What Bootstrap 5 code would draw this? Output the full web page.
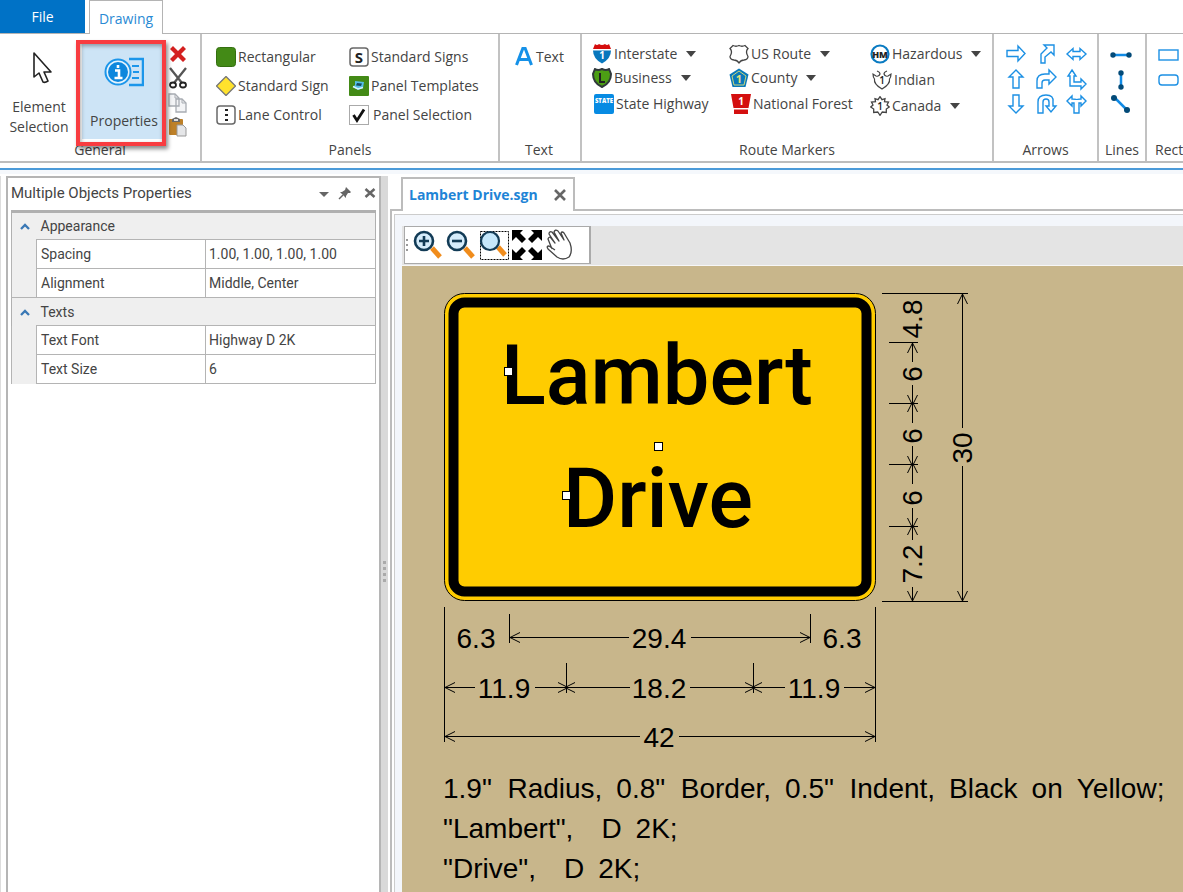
<!DOCTYPE html>
<html lang="en">
<head>
<meta charset="utf-8">
<meta name="viewport" content="width=device-width, initial-scale=1">
<title>Lambert Drive.sgn</title>
<link href="https://cdn.jsdelivr.net/npm/bootstrap@5.3.0/dist/css/bootstrap.min.css" rel="stylesheet">
<style>
body{font-family:"Open Sans","Noto Sans",sans-serif;font-size:14px;line-height:20px;color:#444;background:#fff;overflow:hidden}
button{color:inherit;background:none;border:0;padding:0;text-align:left;white-space:nowrap}
svg{display:block;flex:none}
.tab-strip{height:33px}
.file-tab{width:85px;height:33px;background:#0072c6;color:#fff;text-align:center;margin-right:4px}
.draw-tab{width:74px;height:34px;color:#2a8ad4;border:1px solid #b4b4b4;border-bottom:0;background:#fff;text-align:center;position:relative;z-index:2;text-decoration:none;line-height:35px}
.ribbon{height:130px;border-top:1px solid #b4b4b4;border-bottom:2px solid #bdbdbd}
.grp{border-right:2px solid #c2c2c2;flex:none;padding-top:8px}
.grp-title{height:22px;line-height:22px;text-align:center;margin-top:auto;flex:none}
.g-general{width:202px}.g-panels{width:298px}.g-text{width:82px}.g-route{width:412px}.g-arrows{width:105px}.g-lines{width:48px}.g-rect{width:90px}
.g-panels .tools,.g-text{padding-left:14px}
.g-route .tools{padding-left:10px}
.panel-col{width:133px}
.route-col{width:137px}
.route-col-wide{width:141px}
.tool29{height:29px;display:flex;align-items:center;gap:2px}
.drop{height:24px;display:flex;align-items:center;gap:2px}
.drop::after{content:"";border:5px solid transparent;border-top:6px solid #444;border-bottom:0;margin-left:7px}
.plain{height:28px;display:flex;align-items:center;gap:2px;padding-left:2px}
.big{height:97px;text-align:center;display:flex;flex-direction:column;align-items:center}
.big-el{width:78px;padding-top:9px}
.big-el svg{margin-bottom:12px}
.big-prop{width:84px;background:#cde4f6;padding-top:15px}
.mini{height:25px;display:flex;align-items:center}
.mini-col{height:97px;padding-left:2px}
.red-mark{left:76px;top:40px;width:90px;height:106px;border:4px solid #f83c40;box-shadow:2px 3px 4px rgba(0,0,0,.45),inset 1px 2px 4px rgba(0,0,0,.35);pointer-events:none;z-index:3}
.tick{appearance:none;width:20px;height:20px;margin:0 2px 0 0;border:1px solid #aaa;background:#fff}
.tick:checked{background:#fff url("data:image/svg+xml,%3Csvg xmlns='http://www.w3.org/2000/svg' viewBox='0 0 18 18'%3E%3Cpath d='M3.500 9l3.500 5.500L14 3.500' fill='none' stroke='%23111' stroke-width='2.800'/%3E%3C/svg%3E")}
.blue-rule{height:8px;margin-top:5px;border-top:2px solid #4c9bd9;background:#f5f8fc;border-bottom:2px solid #fff}
.work{border-left:1px solid #ddd;min-height:0}
.side{width:375px;margin-left:5px;border:2px solid #b5b5b5;border-bottom:0;padding:0 3px;font-family:Roboto,sans-serif}
.side-head{height:32px;padding-bottom:3px;font-size:15px}
.props{width:100%;border-top:3px solid #b0b0b0;border-right:1px solid #b0b0b0;border-left:1px solid #b0b0b0;table-layout:fixed;font-size:14px}
.c-gut{width:25px}.c-name{width:169px}
.props td,.props th{padding:0 3px;height:29px;font-weight:400;border:1px solid #b4b4b4;line-height:20px}
.props .cat th,.props .cat td{height:28px;background:#efefef;border-width:0 0 1px}
.props th{padding-left:4px}
.props td.gut{background:#efefef;border-bottom:0;border-top:0}
.props tr.cat td.tw{border-bottom:0}
.props tr.cat+tr~tr.cat td.tw{border-top:1px solid #b4b4b4}
.split{width:7px;background:#d9d9d9;padding-top:385px}
.split i{display:block;width:3px;height:3px;background:#aaa;margin:0 0 3px 2px}
.doc{margin-left:2px;min-width:0;padding-top:1px}
.doc-tabs{height:34px;padding-left:11px;box-shadow:inset 0 -2px #bcbcbc}
.doc-tab{width:174px;height:34px;border:2px solid #bcbcbc;border-bottom:0;background:#fff;color:#1e84d6;font-weight:700;padding:0 6px}
.doc-tab a{color:inherit;text-decoration:none}
.doc-frame{border-left:2px solid #bcbcbc;padding:3px 0 0 2px;min-height:0}
.doc-inner{border-left:1px solid #ccc;border-top:1px solid #ccc;background:#f3f6fb;padding:11px 0 0 7px;min-height:0}
.tools-row{background:#e4e4e4;border-bottom:1px solid #f7f7f7;height:40px;padding-left:2px}
.view-tools{width:187px;height:38px;border:1px solid #aaa;border-right-width:2px;background:#fff;padding-left:1px}
.view-tools button{margin-right:3px}
.paper{background:#c8b68b;min-height:0;overflow:hidden;color:#000}
.notes{font:28px/40px "Liberation Sans",sans-serif;white-space:pre;padding-left:41px;margin:0}
.dim{font:28px "Liberation Sans",sans-serif;text-anchor:middle;fill:#000}
.sign{font:500 83px Roboto,sans-serif;fill:#000;text-anchor:middle}
.ln{stroke:#000;stroke-width:1;fill:none}
.ar{fill:#fff;stroke:#1c90e4;stroke-width:1.4}
</style>
</head>
<body>
<div class="d-flex flex-column vh-100 position-relative">
<nav class="tab-strip d-flex flex-shrink-0">
 <button class="file-tab">File</button>
 <a class="draw-tab" href="#drawing">Drawing</a>
</nav>
<div class="ribbon d-flex flex-shrink-0 overflow-hidden" id="drawing">
 <section class="grp g-general d-flex flex-column">
  <div class="d-flex">
   <button class="big big-el"><svg width="24" height="34" viewBox="0 0 24 34" class="ms-2"><path d="M3 2v24l5-4 4 9q2 1 5-1l-4-9h7z" fill="#fff" stroke="#222" stroke-width="1.600" stroke-linejoin="round"/></svg><span>Element<br>Selection</span></button>
   <button class="big big-prop ms-1"><svg width="40" height="30" viewBox="0 0 40 30" class="mb-4"><path d="M25 2h14v26H25" fill="none" stroke="#1c96ea" stroke-width="2.500"/><path d="M28 9h7M29 15h6M28 21h7" stroke="#1c96ea" stroke-width="2"/><circle cx="14" cy="15" r="12.500" fill="#e6f4fd" stroke="#1c96ea" stroke-width="2"/><circle cx="14" cy="15" r="10" fill="#0d87dd"/><path d="M14 8v3M11 13.500h4v7M10.500 21h8" fill="none" stroke="#fff" stroke-width="2.600"/></svg><span>Properties</span></button>
   <div class="mini-col d-flex flex-column">
    <button class="mini" aria-label="Delete"><svg width="20" height="20" viewBox="0 0 20 20"><path d="M2 5l3-3 5 5 5-5 3 3-5 5 5 5-3 3-5-5-5 5-3-3 5-5z" fill="#d4201f"/></svg></button>
    <button class="mini" aria-label="Cut"><svg width="20" height="22" viewBox="0 0 20 22"><path d="M2 1l12 15M18 1L6 16" stroke="#555" stroke-width="2.300"/><ellipse cx="5" cy="18" rx="3" ry="2.500" fill="none" stroke="#222" stroke-width="1.800"/><ellipse cx="15" cy="18" rx="3" ry="2.500" fill="none" stroke="#222" stroke-width="1.800"/></svg></button>
    <button class="mini" aria-label="Copy"><svg width="20" height="20" viewBox="0 0 20 20"><path d="M1 1h6l4 4v8H1zM8 6h6l4 4v9H8z" fill="#f3f4f6" stroke="#a8acb2" stroke-width="1.300"/><path d="M7 1v4h4M14 6v4h4" fill="none" stroke="#a8acb2"/></svg></button>
    <button class="mini" aria-label="Paste"><svg width="20" height="20" viewBox="0 0 20 20"><rect x="1" y="2" width="14" height="16" rx="1" fill="#bd8028"/><path d="M4 5V2l4-2 4 2v3z" fill="#666"/><rect x="6" y="2" width="4" height="2" fill="#ddd"/><path d="M9 8h6l3 3v8H9z" fill="#e5e6e8" stroke="#999"/></svg></button>
   </div>
  </div>
  <div class="grp-title">General</div>
 </section>
 <section class="grp g-panels d-flex flex-column">
  <div class="tools d-flex">
   <div class="panel-col">
    <button class="tool29"><svg width="20" height="20"><rect x=".5" y=".5" width="19" height="19" rx="3" fill="#438a16" stroke="#346f10"/></svg>Rectangular</button>
    <button class="tool29"><svg width="20" height="20"><path d="M10 .5l9.500 9.500-9.500 9.500L.5 10z" fill="#ffe22d" stroke="#777" stroke-linejoin="round" stroke-width="1.300"/></svg>Standard Sign</button>
    <button class="tool29"><svg width="20" height="20"><rect x="1" y="1" width="18" height="18" rx="3" fill="#fff" stroke="#686868" stroke-width="1.500"/><path d="M9 4h3v2H9zM9 9h3v2H9zM9 14h3v2H9z" fill="#222"/></svg>Lane Control</button>
   </div>
   <div>
    <button class="tool29"><svg width="20" height="20"><rect x="1" y="1" width="18" height="18" rx="3" fill="#fff" stroke="#686868" stroke-width="1.500"/><text x="10" y="15.500" text-anchor="middle" font-size="15" font-weight="700" fill="#222">S</text></svg>Standard Signs</button>
    <button class="tool29"><svg width="20" height="20"><rect width="20" height="20" rx="1" fill="#438a16"/><path d="M6 5l9 1-1 6-5 2-5-3 2-2z" fill="#55bfe8"/><path d="M8 7l5 .5-1 2.500-5-.5z" fill="#154b62"/><path d="M4 10.500l5 2.500 5-1.500" fill="none" stroke="#d9f3ff" stroke-width="1.500"/></svg>Panel Templates</button>
    <label class="tool29"><input type="checkbox" class="tick" checked>Panel Selection</label>
   </div>
  </div>
  <div class="grp-title">Panels</div>
 </section>
 <section class="grp g-text d-flex flex-column">
  <button class="tool29"><svg width="20" height="20"><path d="M2.500 18L9 1h2l6.500 17M5 12.500h10" fill="none" stroke="#1591e8" stroke-width="3"/></svg><span>Text</span></button>
  <div class="grp-title pe-3">Text</div>
 </section>
 <section class="grp g-route d-flex flex-column">
  <div class="tools d-flex">
   <div class="route-col">
    <button class="drop"><svg width="20" height="20" viewBox="0 0 20 20"><path d="M3 0q2 2 4 0q3 2 6 0q2 2 4 0l2 5H1z" fill="#d50d0d"/><path d="M1 6.500h18q0 8-9 13-9-5-9-13z" fill="#0877bd"/><text x="10" y="15" font-size="10" font-weight="700" text-anchor="middle" fill="#fff">1</text></svg>Interstate</button>
    <button class="drop"><svg width="20" height="20" viewBox="0 0 20 20"><path d="M3 1q3 2 7 0q4 2 7 0l2 5q0 9-9 13-9-4-9-13z" fill="#4c9e14" stroke="#30383b" stroke-width="2"/><path d="M8 5v9h5" fill="none" stroke="#222" stroke-width="2"/></svg>Business</button>
    <button class="plain"><svg width="20" height="20"><rect width="20" height="20" rx="2" fill="#078be3"/><text x="10" y="9" font-size="6" font-weight="800" text-anchor="middle" fill="#fff">STATE</text></svg>State Highway</button>
   </div>
   <div class="route-col-wide">
    <button class="drop"><svg width="20" height="20"><path d="M4 1.500q3 1.500 6 0 3 1.500 6 0l3 3q-3 3 0 8 0 3-4 3.500-3 0-5 3-2-3-5-3-4-.5-4-3.500 3-5 0-8z" fill="#fff" stroke="#444" stroke-width="1.300"/></svg>US Route</button>
    <button class="drop"><svg width="20" height="20"><path d="M10 .5l9.500 6-3 12.500h-13L.5 6.500z" fill="#0a79bb"/><path d="M10 3l7 5-2 9H5L3 8z" fill="none" stroke="#cad67a"/><text x="10" y="14.500" text-anchor="middle" font-size="11" font-weight="700" fill="#e8e17b">1</text></svg>County</button>
    <button class="plain"><svg width="20" height="20"><path d="M0 0h20l-2.500 14h-15zM3 15.500h14V20H3z" fill="#d40f0f"/><text x="10" y="11" text-anchor="middle" font-size="10" font-weight="700" fill="#fff">1</text></svg>National Forest</button>
   </div>
   <div>
    <button class="drop"><svg width="20" height="20"><circle cx="10" cy="10" r="8.500" fill="#fff" stroke="#0a7bc2" stroke-width="2.200"/><text x="10" y="13.500" text-anchor="middle" font-size="9" font-weight="800" fill="#222">HM</text></svg>Hazardous</button>
    <button class="plain"><svg width="20" height="20"><path d="M5 1q3 1 3 3-1 3-4 2L1 4q0 3 1.500 5-1 5 7.500 10 8.500-5 7.500-10Q19 7 19 4l-3 2q-3 1-4-2 0-2 3-3" fill="#fff" stroke="#444" stroke-width="1.200"/><text x="10" y="14" text-anchor="middle" font-size="10" font-weight="600" fill="#222">1</text></svg>Indian</button>
    <button class="drop"><svg width="20" height="20"><path d="M10 .7l2 3 3-1-.5 3 4 .3-1.500 3 2.300 2-3 2v3.500l-4-.5L10 19.300 7.700 16l-4 .5V13l-3-2L3 9 1.500 6l4-.3L5 2.700l3 1z" fill="#fff" stroke="#444" stroke-width="1.300"/><text x="10" y="14" text-anchor="middle" font-size="10" font-weight="600" fill="#222">1</text></svg>Canada</button>
   </div>
  </div>
  <div class="grp-title">Route Markers</div>
 </section>
 <section class="grp g-arrows d-flex flex-column">
  <svg width="84" height="76" viewBox="0 0 84 76" class="mx-auto" role="img" aria-label="Arrow shapes"><g class="ar" transform="translate(1 0)">
   <path d="M2 8.500h11V4l7 7.500-7 7.500v-4.500H2z"/>
   <path d="M36 21v-9l6-6-3-3h10v10l-3-3-6 5v6z"/>
   <path d="M62 12l6-5.500v3h7v-3l6 5.500-6 5.500v-3h-7v3z"/>
   <path d="M11 28l7 7h-4v11H8V35H4z"/>
   <path d="M32 46v-7q0-7 8-7h4v-4l7 7-7 7v-4h-4q-3 0-3 3v5z"/>
   <path d="M67 28l4 6h-2v6h7v-3l5 5-5 5v-3H65V34h-2z"/>
   <path d="M8 53h6v11h4l-7 7-7-7h4z"/>
   <path d="M33 71V60q0-7 8-7t7 7v4h3l-5 6-5-6h3v-4q0-3-3-3t-3 3v11z"/>
   <path d="M62 59l5-5v3q5 0 5 1 0-1 4-1v-3l5 5-5 5v-3h-2v10h-5V61h-2v3z"/></g></svg>
  <div class="grp-title">Arrows</div>
 </section>
 <section class="grp g-lines d-flex flex-column">
  <svg width="24" height="76" viewBox="0 0 24 76" class="mx-auto" role="img" aria-label="Line shapes"><g stroke="#118be6" stroke-width="2.500" fill="#034a78"><path d="M3 13h16M11 31v14M5 56l12 12"/><g stroke="none"><circle cx="3" cy="13" r="2.700"/><circle cx="19" cy="13" r="2.700"/><circle cx="11" cy="31" r="2.700"/><circle cx="11" cy="45" r="2.700"/><circle cx="4" cy="56" r="3"/><circle cx="17" cy="68" r="3"/></g></g></svg>
  <div class="grp-title">Lines</div>
 </section>
 <section class="grp g-rect d-flex flex-column ps-1">
  <svg width="30" height="76" viewBox="0 0 30 76" class="ms-1" role="img" aria-label="Rectangle shapes"><g class="ar" transform="translate(2 0)"><rect x="2" y="8" width="19" height="10"/><rect x="2" y="33" width="19" height="10" rx="3"/></g></svg>
  <div class="grp-title text-start ps-1">Rectangles</div>
 </section>
</div>
<div class="red-mark position-absolute"></div>
<div class="blue-rule flex-shrink-0"></div>

<main class="work d-flex flex-grow-1">
 <aside class="side flex-shrink-0">
  <div class="side-head d-flex align-items-center"><span class="me-auto">Multiple Objects Properties</span>
   <button aria-label="Window menu" class="me-2"><svg width="12" height="12"><path d="M1 5h10L6 10z" fill="#666"/></svg></button>
   <button aria-label="Pin" class="me-2"><svg width="14" height="14"><path d="M8 1l5 5-1 1-2 0-2 3v2L2 6h2l3-2z" fill="#666"/><path d="M5 9l-4 4" stroke="#666" stroke-width="1.500"/></svg></button>
   <button aria-label="Close panel" class="ms-1"><svg width="12" height="12"><path d="M1.500 2l9 8M10.500 2l-9 8" stroke="#666" stroke-width="2.500"/></svg></button>
  </div>
  <table class="props">
   <colgroup><col class="c-gut"><col class="c-name"><col></colgroup>
   <tbody>
   <tr class="cat"><td class="tw"><svg width="12" height="10" class="ms-1"><path d="M2 8l4-4 4 4" fill="none" stroke="#3a78b5" stroke-width="2.300"/></svg></td><th colspan="2">Appearance</th></tr>
   <tr><td class="gut"></td><th>Spacing</th><td>1.00, 1.00, 1.00, 1.00</td></tr>
   <tr><td class="gut"></td><th>Alignment</th><td>Middle, Center</td></tr>
   <tr class="cat"><td class="tw"><svg width="12" height="10" class="ms-1"><path d="M2 8l4-4 4 4" fill="none" stroke="#3a78b5" stroke-width="2.300"/></svg></td><th colspan="2">Texts</th></tr>
   <tr><td class="gut"></td><th>Text Font</th><td>Highway D 2K</td></tr>
   <tr><td class="gut"></td><th>Text Size</th><td>6</td></tr>
   </tbody>
  </table>
 </aside>
 <div class="split flex-shrink-0"><i></i><i></i><i></i><i></i></div>
 <section class="doc flex-grow-1 d-flex flex-column">
  <div class="doc-tabs flex-shrink-0"><div class="doc-tab d-flex align-items-center justify-content-between"><a href="#sheet">Lambert Drive.sgn</a><button aria-label="Close document"><svg width="14" height="14"><path d="M2 2l10 10M12 2L2 12" stroke="#666" stroke-width="2.600"/></svg></button></div></div>
  <div class="doc-frame flex-grow-1 d-flex flex-column">
  <div class="doc-inner flex-grow-1 d-flex flex-column">
   <div class="tools-row flex-shrink-0"><div class="view-tools d-flex align-items-center">
    <svg width="3" height="14" class="me-1"><path d="M0 1h2v2H0zM0 6h2v2H0zM0 11h2v2H0z" fill="#999"/></svg>
    <button aria-label="Zoom in"><svg width="30" height="32"><path d="M19 19l8 9" stroke="#f08c1c" stroke-width="5"/><circle cx="11" cy="12" r="9" fill="#d5ecfb" stroke="#123b56" stroke-width="2.600"/><path d="M6 12h10M11 7v10" stroke="#123b56" stroke-width="2.600"/></svg></button>
    <button aria-label="Zoom out"><svg width="30" height="32"><path d="M19 19l8 9" stroke="#f08c1c" stroke-width="5"/><circle cx="11" cy="12" r="9" fill="#d5ecfb" stroke="#123b56" stroke-width="2.600"/><path d="M6 12h10" stroke="#123b56" stroke-width="2.600"/></svg></button>
    <button aria-label="Zoom window"><svg width="30" height="32"><rect x="1.500" y="2.500" width="28" height="28" fill="none" stroke="#000" stroke-dasharray="2 1"/><path d="M19 18l7 8" stroke="#f08c1c" stroke-width="5"/><circle cx="11" cy="12" r="9" fill="#c5e7fb" stroke="#123b56" stroke-width="2.200"/></svg></button>
    <button aria-label="Fit to window"><svg width="30" height="32" viewBox="0 0 30 32"><path d="M0 1h11L8 4l6 6-4 4-6-6-4 4zM30 1H19l3 3-6 6 4 4 6-6 4 4zM0 31h11l-3-3 6-6-4-4-6 6-4-4zM30 31H19l3-3-6-6 4-4 6 6 4-4z"/></svg></button>
    <button aria-label="Pan"><svg width="28" height="32"><path d="M7 20L3 10q1-3 3-1l4 5-6-9q0-3 3-2l7 9-5-9q1-3 4-1l6 9-3-7q1-2 3 0l6 10q3 9-1 14-6 4-12 0L3 20q-2-3 1-3l6 4" fill="#fff" stroke="#444" stroke-width="1.300" stroke-linejoin="round"/></svg></button>
   </div></div>
   <div class="paper flex-grow-1" id="sheet">
    <svg width="600" height="503" viewBox="402 266 600 503" role="img" aria-label="Sign with dimensions">
     <defs>
      <marker id="tip" markerWidth="12" markerHeight="12" refX="10" refY="6" orient="auto-start-reverse" markerUnits="userSpaceOnUse"><path d="M0 1L10 6L0 11" fill="none" stroke="#000"/></marker>
     </defs>
     <rect x="444.500" y="293.500" width="431" height="307" rx="20" fill="#fc0" stroke="#000"/>
     <rect x="453.500" y="302.500" width="413" height="289" rx="11" fill="none" stroke="#000" stroke-width="10"/>
     <text class="sign" x="657" y="404">Lambert</text>
     <text class="sign" x="658" y="527">Drive</text>
     <g fill="#fff" stroke="#000"><rect x="504.500" y="367.500" width="8" height="8"/><rect x="654.500" y="442.500" width="8" height="8"/><rect x="562.500" y="491.500" width="8" height="8"/></g>
     <g class="ln" shape-rendering="crispEdges">
      <path d="M881.500 293.500h86M881.500 601.500h86M889 342.500h29M889 403.500h29M889 464.500h29M889 526.500h29"/>
      <path d="M444.500 607v135M875.500 607v135M509.500 614v29M810.500 614v29M566.500 663v30M753.500 663v30"/>
     </g>
     <g class="ln">
      <path d="M962.500 428V294" marker-end="url(#tip)"/><path d="M962.500 466V601" marker-end="url(#tip)"/>
      <path d="M912.500 362V343" marker-end="url(#tip)"/><path d="M912.500 385V405" marker-end="url(#tip)"/>
      <path d="M912.500 423V402" marker-end="url(#tip)"/><path d="M912.500 446V466" marker-end="url(#tip)"/>
      <path d="M912.500 484V463" marker-end="url(#tip)"/><path d="M912.500 508V528" marker-end="url(#tip)"/>
      <path d="M912.500 540V525" marker-end="url(#tip)"/><path d="M912.500 587V601" marker-end="url(#tip)"/>
      <path d="M629 637.500H510" marker-end="url(#tip)"/><path d="M691 637.500H810" marker-end="url(#tip)"/>
      <path d="M475 687.500H445" marker-end="url(#tip)"/><path d="M535 687.500H568" marker-end="url(#tip)"/>
      <path d="M630 687.500H565" marker-end="url(#tip)"/><path d="M690 687.500H755" marker-end="url(#tip)"/>
      <path d="M785 687.500H752" marker-end="url(#tip)"/><path d="M844 687.500H875" marker-end="url(#tip)"/>
      <path d="M640 736.500H445" marker-end="url(#tip)"/><path d="M679 736.500H875" marker-end="url(#tip)"/>
     </g>
     <g class="dim">
      <text x="476" y="648">6.3</text><text x="659" y="648">29.4</text><text x="842" y="648">6.3</text>
      <text x="504" y="698">11.9</text><text x="659" y="698">18.2</text><text x="814" y="698">11.9</text>
      <text x="659" y="747">42</text>
      <text transform="translate(922 319) rotate(-90)">4.8</text>
      <text transform="translate(922 374) rotate(-90)">6</text>
      <text transform="translate(922 436) rotate(-90)">6</text>
      <text transform="translate(922 498) rotate(-90)">6</text>
      <text transform="translate(922 564) rotate(-90)">7.2</text>
      <text transform="translate(972 448) rotate(-90)">30</text>
     </g>
    </svg>
    <p class="notes">1.9"  Radius,&ensp;0.8"  Border,&ensp;0.5"  Indent,&ensp;Black&ensp;on&ensp;Yellow;
"Lambert",&ensp;&ensp;D&ensp;2K;
"Drive",&ensp;&ensp;D&ensp;2K;</p>
   </div>
  </div></div>
 </section>
</main>
</div>
<script src="https://cdn.jsdelivr.net/npm/bootstrap@5.3.0/dist/js/bootstrap.bundle.min.js"></script>
</body>
</html>
